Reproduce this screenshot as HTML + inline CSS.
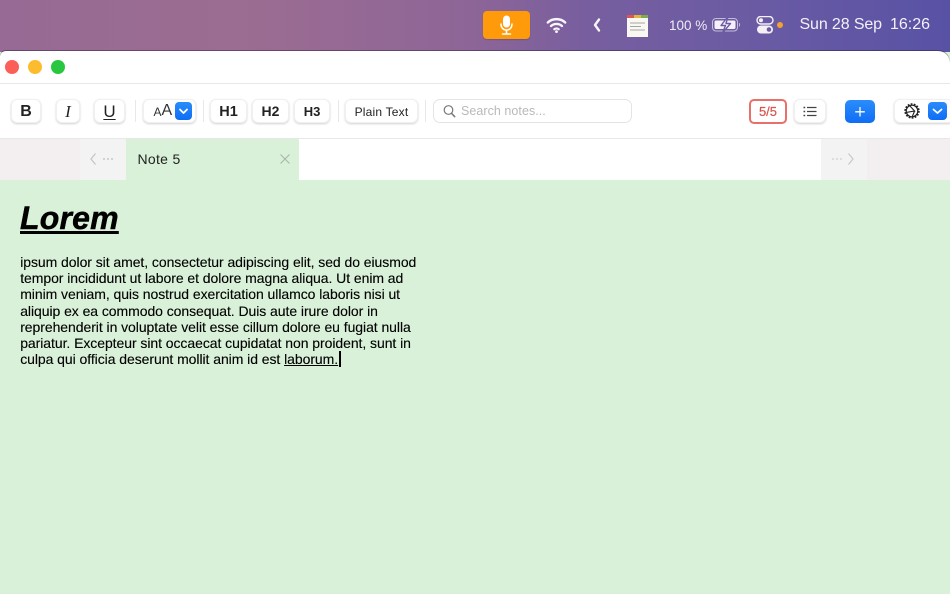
<!DOCTYPE html>
<html>
<head>
<meta charset="utf-8">
<style>
html,body{margin:0;padding:0;width:950px;height:594px;overflow:hidden;background:#d9f1d9;font-family:"Liberation Sans",sans-serif}
.a{position:absolute}
#bar{left:0;top:0;width:950px;height:52px;background:linear-gradient(90deg,#966a94 0%,#9c6d92 25%,#8d6597 50%,#775e9f 62%,#6b5ba3 78%,#5852a5 100%)}
#win{left:0;top:51px;width:950px;height:88px;background:#fff;border-radius:6px 12px 0 0;box-shadow:0 -1px 0 rgba(40,30,60,.45)}
.b{position:absolute;top:99px;height:24px;box-sizing:border-box;background:#fff;border-radius:6px;border:1px solid #f0f0f0;box-shadow:0 1px 2px rgba(0,0,0,.18);text-align:center;line-height:23px;color:#222;font-size:14px}
.s{position:absolute;top:100px;width:1px;height:22px;background:#e8e8e8}
.bl{position:absolute;background:linear-gradient(#2b8dfb,#0f6df5);border-radius:4px}
.t{position:absolute;white-space:pre;margin:0}
</style>
</head>
<body>
<div class="a" id="bar"></div>
<div class="a" style="left:483px;top:11px;width:47px;height:28px;background:#ff9a0a;border-radius:4px;box-shadow:0 1px 1px rgba(0,0,0,.15)"></div>
<svg class="a" style="left:483px;top:11px" width="47" height="28" viewBox="0 0 47 28" fill="none">
<rect x="20" y="4.500" width="7" height="12" rx="3.500" fill="#fff"/>
<path d="M18 13c0 3.800 2.400 6 5.500 6s5.500-2.200 5.500-6M23.500 19v3.500M19.500 23h8" stroke="#fff" stroke-width="1.500" stroke-linecap="round"/>
</svg>
<svg class="a" style="left:546px;top:15px" width="21" height="20" viewBox="0 0 21 20" fill="none" stroke="#f7f4fa" stroke-linecap="round">
<path d="M1.800 7.500C6.500 3 14.500 3 19.200 7.500" stroke-width="2.400"/>
<path d="M5 11C8 8.300 13 8.300 16 11" stroke-width="2.400"/>
<path d="M8.300 14.200c1.300-.9 3.100-.9 4.400 0" stroke-width="2.200"/>
<circle cx="10.500" cy="16.600" r="1.400" fill="#f7f4fa" stroke="none"/>
</svg>
<svg class="a" style="left:592px;top:17px" width="10" height="16" viewBox="0 0 10 16" fill="none"><path d="M7 2.500L3 8l4 5.500" stroke="#f7f4fa" stroke-width="2.400" stroke-linecap="round" stroke-linejoin="round"/></svg>
<svg class="a" style="left:626px;top:14px" width="23" height="23" viewBox="0 0 23 23">
<rect x="1" y="1" width="21" height="22" fill="#f8f7f2"/>
<rect x="1" y="1" width="7" height="3" fill="#d9574e"/><rect x="8" y="1" width="7" height="3" fill="#e3b43e"/><rect x="15" y="1" width="7" height="3" fill="#79ad4a"/>
<path d="M4 9h15M4 12.500h11M4 16h15" stroke="#a5a5a5" stroke-width="1"/>
</svg>
<div class="t" style="left:669px;top:17px;font-size:13.500px;line-height:17px;color:#f0ecf6">100 %</div>
<svg class="a" style="left:711px;top:16px" width="32" height="18" viewBox="0 0 32 18" fill="none">
<rect x="1.500" y="2.500" width="25" height="12.500" rx="3.500" stroke="#e8e4f0" stroke-width="1" opacity=".7"/>
<rect x="3.500" y="4.500" width="21" height="8.500" rx="1.500" fill="#f4f0f8"/>
<path d="M28.300 6.800c1 .4 1 3.600 0 4z" fill="#e8e4f0"/>
<path d="M17 0.500L10 9.500h4.500L11.500 17l8-9.500h-4.500z" fill="#f4f0f8" stroke="#6d5ca2" stroke-width="1.400" stroke-linejoin="round"/>
</svg>
<svg class="a" style="left:756px;top:16px" width="18" height="18" viewBox="0 0 18 18">
<rect x="1" y="0.500" width="16" height="7.500" rx="3.700" fill="none" stroke="#f4f0f8" stroke-width="1.400"/>
<circle cx="5" cy="4.200" r="2" fill="#f4f0f8"/>
<rect x="1" y="9.500" width="16" height="8" rx="4" fill="#f4f0f8"/>
<circle cx="13" cy="13.500" r="2.300" fill="#6d5ca2"/>
</svg>
<div class="a" style="left:777px;top:22px;width:6px;height:6px;border-radius:50%;background:#f5a033"></div>
<div class="t" style="left:799.500px;top:15px;font-size:16px;line-height:19px;color:#f4f0f8;letter-spacing:-.12px">Sun 28 Sep</div>
<div class="t" style="left:890px;top:15px;font-size:16px;line-height:19px;color:#f4f0f8">16:26</div>

<div class="a" id="win"></div>
<div class="a" style="left:0;top:83px;width:950px;height:1px;background:#e8e8e8"></div>
<div class="a" style="left:0;top:138px;width:950px;height:1px;background:#e8e8e8"></div>
<div class="a" style="left:5px;top:60px;width:14px;height:14px;border-radius:50%;background:#fb5f57"></div>
<div class="a" style="left:28px;top:60px;width:14px;height:14px;border-radius:50%;background:#fdbb2e"></div>
<div class="a" style="left:51px;top:60px;width:14px;height:14px;border-radius:50%;background:#29c73f"></div>

<div class="b" style="left:11px;width:30px;font-weight:700;font-size:16px">B</div>
<div class="b" style="left:56px;width:24px;font-family:'Liberation Serif',serif;font-style:italic;font-size:17px">I</div>
<div class="b" style="left:94px;width:31px;font-size:17px;text-decoration:underline;text-underline-offset:2px">U</div>
<div class="s" style="left:135px"></div>
<div class="b" style="left:143px;width:53px"></div>
<div class="t" style="left:153.500px;top:106px;font-size:12px;line-height:13px;color:#333">A</div>
<div class="t" style="left:161.500px;top:102px;font-size:16px;line-height:17px;color:#333">A</div>
<div class="bl" style="left:175px;top:102px;width:17px;height:18px"></div>
<svg class="a" style="left:175px;top:102px" width="17" height="18" fill="none"><path d="M5 7.500l3.500 3.500L12 7.500" stroke="#fff" stroke-width="1.800" stroke-linecap="round" stroke-linejoin="round"/></svg>
<div class="s" style="left:203px"></div>
<div class="b" style="left:210px;width:37px;font-weight:700;font-size:14.500px;line-height:25px">H1</div>
<div class="b" style="left:252px;width:37px;font-weight:700;font-size:14px;line-height:23px">H2</div>
<div class="b" style="left:294px;width:36px;font-weight:700;font-size:13px;line-height:24px">H3</div>
<div class="s" style="left:338px"></div>
<div class="b" style="left:345px;width:73px;font-size:12px;letter-spacing:.2px;line-height:24px">Plain Text</div>
<div class="s" style="left:425px"></div>
<div class="a" style="left:433px;top:99px;width:199px;height:24px;box-sizing:border-box;border:1.500px solid #e4e4e4;border-radius:7px;background:#fff"></div>
<svg class="a" style="left:442px;top:104px" width="15" height="15" fill="none" stroke="#777"><circle cx="6.500" cy="6" r="4.300" stroke-width="1.200"/><path d="M9.700 9.500l3 3.200" stroke-width="1.500" stroke-linecap="round"/></svg>
<div class="t" style="left:461px;top:104px;font-size:12.500px;line-height:15px;color:#b9b9b9;letter-spacing:.05px">Search notes...</div>

<div class="a" style="left:749px;top:99px;width:38px;height:25px;box-sizing:border-box;border:2px solid #ea6f69;border-radius:5px;background:#fff;text-align:center;line-height:21px;font-size:13px;color:#d9534c;-webkit-text-stroke:.2px #d9534c">5/5</div>
<div class="b" style="left:794px;width:32px"></div>
<svg class="a" style="left:803px;top:105px" width="14" height="13" stroke="#444" stroke-width="1.300"><path d="M4 2.500h9.500M4 6.500h9.500M4 10.500h9.500"/><path d="M.5 2.500h1.700M.5 6.500h1.700M.5 10.500h1.700" stroke-width="1.500"/></svg>
<div class="bl" style="left:845px;top:100px;width:30px;height:23px;border-radius:5px"></div>
<svg class="a" style="left:845px;top:100px" width="30" height="23" stroke="#fff" stroke-width="1.300"><path d="M15 7v9.500M10.200 11.800h9.600"/></svg>
<div class="b" style="left:894px;width:60px"></div>
<svg class="a" style="left:903px;top:102px" width="18" height="18" viewBox="0 0 18 18" fill="none" stroke="#222">
<circle cx="9" cy="9" r="6.900" stroke-width="1.600" stroke-dasharray="1.800 1.300"/>
<circle cx="9" cy="9" r="5.800" stroke-width="1.200"/>
<path d="M6.700 3.800L11.600 9l-7.700 1.300M11.600 9l-2.300 5.500" stroke-width="1.100"/>
</svg>
<div class="bl" style="left:928px;top:102px;width:19px;height:18px"></div>
<svg class="a" style="left:928px;top:102px" width="19" height="18" fill="none"><path d="M5.500 7.500L9.500 11l4-3.500" stroke="#fff" stroke-width="1.800" stroke-linecap="round" stroke-linejoin="round"/></svg>

<div class="a" style="left:0;top:139px;width:950px;height:41px;background:#fff"></div>
<div class="a" style="left:0;top:139px;width:80px;height:41px;background:#f3eff1"></div>
<div class="a" style="left:80px;top:139px;width:46px;height:41px;background:#f4f3f3"></div>
<div class="a" style="left:821px;top:139px;width:46px;height:41px;background:#f4f3f3"></div>
<div class="a" style="left:867px;top:139px;width:83px;height:41px;background:#f3eff1"></div>
<svg class="a" style="left:88px;top:152px" width="28" height="14" fill="none"><path d="M7.500 1.500L3 7l4.500 5.500" stroke="#c4c4c4" stroke-width="1.200"/><path d="M15 7h2M19 7h2M23 7h2" stroke="#c8c8c8" stroke-width="1.600"/></svg>
<svg class="a" style="left:831px;top:152px" width="28" height="14" fill="none"><path d="M1 7h2M5 7h2M9 7h2" stroke="#d6d6d6" stroke-width="1.600"/><path d="M17.500 1.500L22 7l-4.500 5.500" stroke="#c8c8c8" stroke-width="1.200"/></svg>
<div class="a" style="left:126px;top:139px;width:173px;height:41px;background:#d9f1d9"></div>
<div class="t" style="left:137.500px;top:151px;font-size:14px;line-height:17px;color:#222;letter-spacing:.3px">Note 5</div>
<svg class="a" style="left:279px;top:153px" width="12" height="12" stroke="#a9b5a9" stroke-width="1.100"><path d="M1.500 1.500l9 9M10.500 1.500l-9 9"/></svg>

<div class="a" style="left:0;top:180px;width:950px;height:414px;background:#d9f1d9"></div>
<div class="t" style="left:20px;top:200px;font-size:32px;line-height:37px;font-weight:700;font-style:italic;color:#000;text-decoration:underline;text-decoration-thickness:2.500px;text-underline-offset:2px;-webkit-text-stroke:.5px #000;letter-spacing:.2px">Lorem</div>
<div class="t" style="left:20.200px;top:254px;font-size:14px;line-height:16.170px;color:#000;letter-spacing:-.06px;-webkit-text-stroke:.12px #000">ipsum dolor sit amet, consectetur adipiscing elit, sed do eiusmod
tempor incididunt ut labore et dolore magna aliqua. Ut enim ad
minim veniam, quis nostrud exercitation ullamco laboris nisi ut
aliquip ex ea commodo consequat. Duis aute irure dolor in
reprehenderit in voluptate velit esse cillum dolore eu fugiat nulla
pariatur. Excepteur sint occaecat cupidatat non proident, sunt in
culpa qui officia deserunt mollit anim id est <span style="text-decoration:underline">laborum.</span></div>
<div class="a" style="left:339px;top:351px;width:2px;height:16px;background:#000"></div>
</body>
</html>
